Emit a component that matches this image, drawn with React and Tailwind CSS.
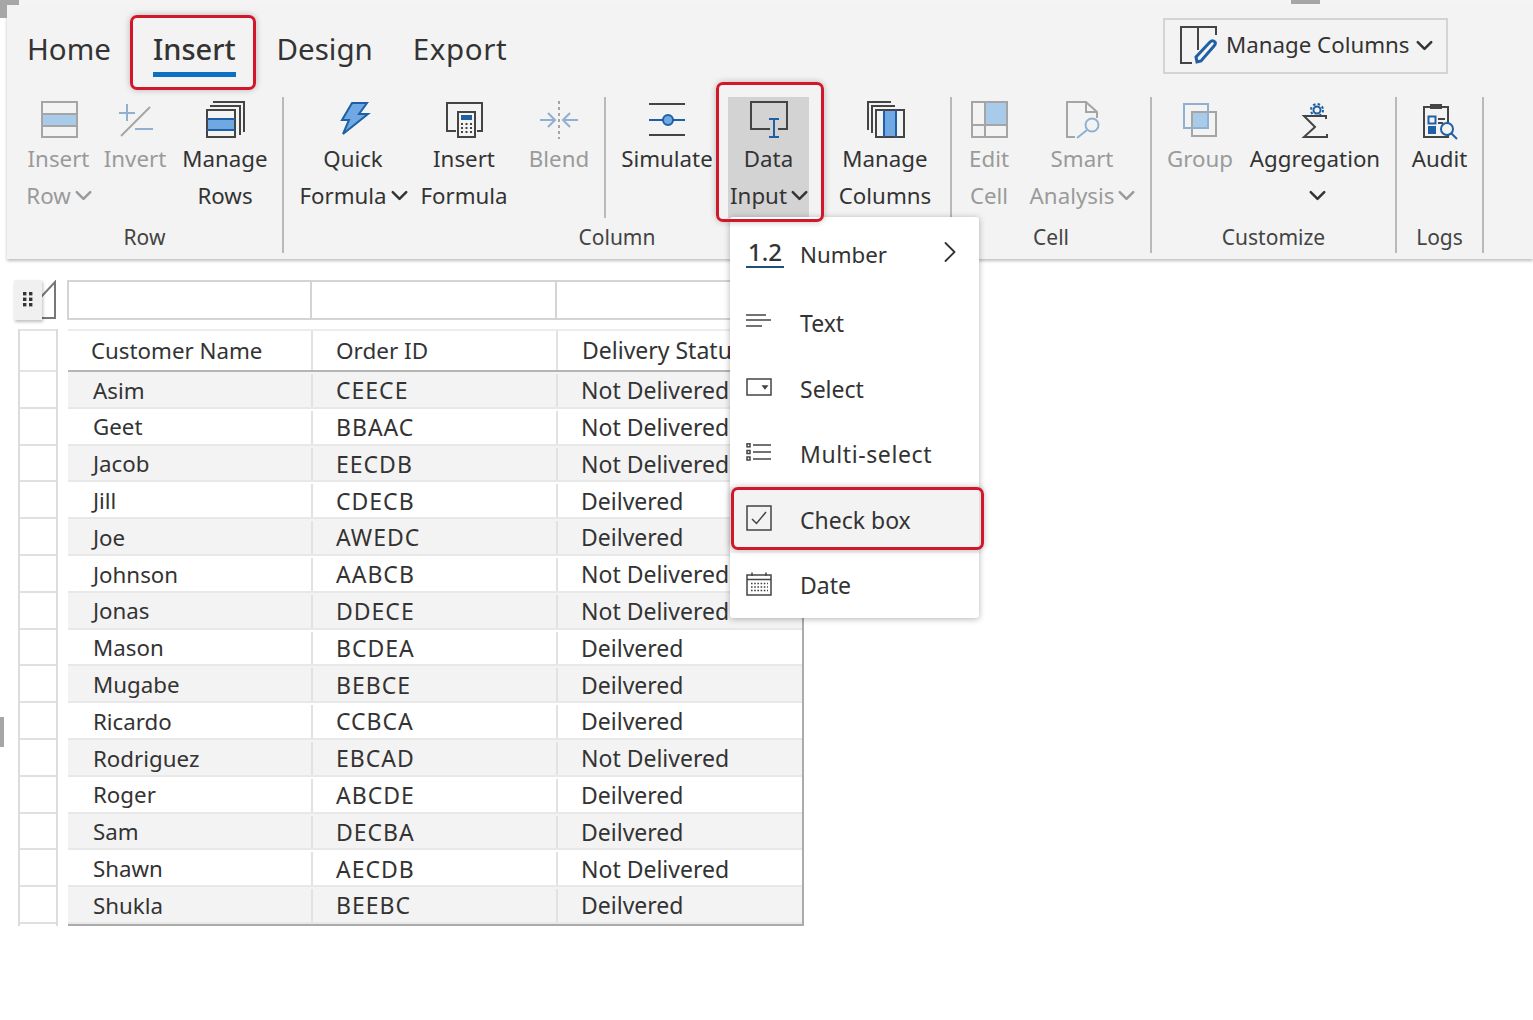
import { ChevronDown, ChevronRight } from 'lucide-react';

const font = { fontFamily: '"Noto Sans", sans-serif' };

const GREY = '#a5a5a5';
const DARK = '#444444';
const BLUE = '#1f5fa6';
const FILL = '#6fa8e3';
const PALE = '#a9cbea';
const MUTED = '#8fb0d0';

function Ico({ children, size = 40 }) {
  return (
    <svg width={size} height={size} viewBox="0 0 40 40" fill="none" strokeWidth="2" className="shrink-0">
      {children}
    </svg>
  );
}

const icons = {
  insertRow: (
    <Ico>
      <rect x="3" y="14" width="35" height="12" fill={PALE} />
      <rect x="3" y="2" width="35" height="35" stroke={GREY} />
      <path d="M3 14H38M3 26H38" stroke={GREY} />
    </Ico>
  ),
  invert: (
    <Ico>
      <path d="M4 13H20M12 4V21M20 29H38" stroke={MUTED} />
      <path d="M6 36L35 7" stroke={GREY} />
    </Ico>
  ),
  manageRows: (
    <Ico>
      <path d="M8 2H39V32M5 6H35V35" stroke={DARK} />
      <rect x="2" y="19" width="28" height="11" fill={FILL} />
      <rect x="2" y="10" width="28" height="27" stroke={DARK} fill="none" />
      <path d="M2 19H30M2 30H30" stroke={BLUE} />
    </Ico>
  ),
  quick: (
    <Ico>
      <path d="M19 3H34L26 14H35L10 34L16 20H9Z" fill={FILL} stroke={BLUE} />
    </Ico>
  ),
  insertFormula: (
    <Ico>
      <path d="M12 31H3V3H38V31H33" stroke={DARK} />
      <rect x="14" y="12" width="17" height="25" stroke={DARK} fill="#f3f3f3" />
      <rect x="17" y="15" width="11" height="5" fill={BLUE} />
      <path d="M17 24H28M17 28H28M17 32H28" stroke={DARK} strokeDasharray="2 2.5" />
    </Ico>
  ),
  blend: (
    <Ico>
      <path d="M20 1V39" stroke={GREY} strokeDasharray="3 3" />
      <path d="M1 20H15M9 13L16 20L9 27M39 20H25M31 13L24 20L31 27" stroke={MUTED} />
    </Ico>
  ),
  simulate: (
    <Ico>
      <path d="M2 4H38M2 35H38" stroke={DARK} />
      <path d="M2 20H38" stroke={BLUE} />
      <circle cx="21" cy="20" r="5" fill={FILL} stroke={BLUE} />
    </Ico>
  ),
  dataInput: (
    <Ico>
      <path d="M21 29H2V2H38V29H29" stroke={DARK} />
      <path d="M25 19V36M20 19H30M20 37H30" stroke={BLUE} />
    </Ico>
  ),
  manageCols: (
    <Ico>
      <path d="M3 30V2H26M7 33V6H30" stroke={DARK} />
      <rect x="19" y="10" width="12" height="27" fill={FILL} />
      <rect x="11" y="10" width="28" height="27" stroke={DARK} />
      <path d="M19 10V37M31 10V37" stroke={BLUE} />
    </Ico>
  ),
  editCell: (
    <Ico>
      <rect x="16" y="2" width="22" height="23" fill={PALE} />
      <rect x="3" y="2" width="35" height="35" stroke={GREY} />
      <path d="M16 2V37M3 25H38" stroke={GREY} />
    </Ico>
  ),
  smart: (
    <Ico>
      <path d="M13 37H5V2H24L35 12V18M24 2V12H35" stroke={GREY} />
      <circle cx="30" cy="25" r="6.5" stroke={MUTED} />
      <path d="M25 30L15 38" stroke={MUTED} />
    </Ico>
  ),
  group: (
    <Ico>
      <rect x="12" y="12" width="16" height="16" fill={PALE} />
      <rect x="12" y="12" width="24" height="24" stroke={GREY} />
      <rect x="4" y="4" width="24" height="24" stroke={MUTED} />
    </Ico>
  ),
  aggregation: (
    <Ico>
      <circle cx="22" cy="10" r="3.5" stroke={BLUE} />
      <circle cx="22" cy="10" r="6" stroke={BLUE} strokeDasharray="2.5 2.2" />
      <path d="M31 15V19" stroke={DARK} />
      <path d="M32 16H9L20 27L9 37H32V34" stroke={DARK} />
    </Ico>
  ),
  audit: (
    <Ico>
      <rect x="4" y="7" width="24" height="30" stroke={DARK} />
      <rect x="10" y="4" width="12" height="5" fill={DARK} />
      <rect x="8.5" y="16.5" width="7" height="7" stroke={BLUE} />
      <rect x="8" y="26" width="8" height="8" fill={BLUE} />
      <path d="M18 19H25M18 23H23" stroke={DARK} />
      <circle cx="27" cy="29" r="6" stroke={BLUE} fill="#f3f3f3" />
      <path d="M31 33L37 39" stroke={BLUE} />
    </Ico>
  ),
};

// one ribbon button: icon on top, then up to two lines of text
function Tool({ icon, lines, caret, disabled, className = '' }) {
  const [first, second] = lines;
  return (
    <div className={'flex flex-col items-center pt-[3px] shrink-0 text-[22.3px] ' + (disabled ? 'text-[#9a9a9a] ' : 'text-[#333333] ') + className}>
      <div className="h-[40px]">{icons[icon]}</div>
      <div className="h-[37px] leading-[37px] whitespace-nowrap">{first}</div>
      <div className="h-[37px] leading-[37px] flex items-center whitespace-nowrap">
        {second}
        {caret && <ChevronDown size={27} strokeWidth={2.2} className="-ml-[1px] -mr-[6px]" />}
      </div>
    </div>
  );
}

function Group({ label, className, children }) {
  return (
    <div className={'flex flex-col h-[156px] border-r-2 border-[#b9b9b9] shrink-0 ' + className}>
      <div className="flex h-[121px] shrink-0">{children}</div>
      <div className="text-center text-[21px] text-[#444444] pt-[4px] leading-[31px]">{label}</div>
    </div>
  );
}

const rows = [
  ['Asim', 'CEECE', 'Not Delivered'],
  ['Geet', 'BBAAC', 'Not Delivered'],
  ['Jacob', 'EECDB', 'Not Delivered'],
  ['Jill', 'CDECB', 'Deilvered'],
  ['Joe', 'AWEDC', 'Deilvered'],
  ['Johnson', 'AABCB', 'Not Delivered'],
  ['Jonas', 'DDECE', 'Not Delivered'],
  ['Mason', 'BCDEA', 'Deilvered'],
  ['Mugabe', 'BEBCE', 'Deilvered'],
  ['Ricardo', 'CCBCA', 'Deilvered'],
  ['Rodriguez', 'EBCAD', 'Not Delivered'],
  ['Roger', 'ABCDE', 'Deilvered'],
  ['Sam', 'DECBA', 'Deilvered'],
  ['Shawn', 'AECDB', 'Not Delivered'],
  ['Shukla', 'BEEBC', 'Deilvered'],
];

const menuItems = [
  {
    label: 'Number',
    row: 'h-[68.5px] pb-[4px]',
    text: 'text-[22.3px]',
    icon: (
      <div className="w-[38px] text-center border-b-2 border-[#1f4e79] font-medium text-[24px] leading-[29px] text-[#333333]">1.2</div>
    ),
    more: true,
  },
  {
    label: 'Text',
    icon: (
      <svg width="26" height="14" viewBox="0 0 26 14" fill="none" stroke={DARK} strokeWidth="1.5">
        <path d="M0 1H20M0 6H25M0 12H16" />
      </svg>
    ),
  },
  {
    label: 'Select',
    icon: (
      <svg width="26" height="18" viewBox="0 0 26 18" fill="none" stroke={DARK} strokeWidth="1.5">
        <rect x="1" y="1" width="24" height="16" />
        <path d="M17 8H21L19 10.5Z" fill={DARK} />
      </svg>
    ),
  },
  {
    label: 'Multi-select',
    text: 'tracking-[0.6px]',
    icon: (
      <svg width="26" height="18" viewBox="0 0 26 18" fill="none" stroke={DARK} strokeWidth="1.5">
        <path d="M7 2H25M7 9H25M7 16H25" />
        <rect x="1" y="0.8" width="3" height="3" />
        <rect x="1" y="7.5" width="3" height="3" />
        <rect x="1" y="14" width="3" height="3" />
      </svg>
    ),
  },
  {
    label: 'Check box',
    active: true,
    icon: (
      <svg width="26" height="26" viewBox="0 0 26 26" fill="none" stroke={DARK} strokeWidth="1.5">
        <rect x="1" y="1" width="24" height="24" />
        <path d="M6 14L10.5 18.5L20 7" />
      </svg>
    ),
  },
  {
    label: 'Date',
    icon: (
      <svg width="26" height="24" viewBox="0 0 26 24" fill="none" stroke={DARK} strokeWidth="1.5">
        <rect x="1" y="3" width="24" height="20" />
        <path d="M1 7.5H25M6 0.5V4M20 0.5V4" />
        <path d="M5 11.5H22M5 15H22M5 18.5H22" strokeDasharray="1.6 1.6" />
      </svg>
    ),
  },
];

function RedBox({ className }) {
  return <div className={'absolute border-[3px] border-[#d3162a] rounded-[7px] shadow-[0_0_6px_rgba(0,0,0,0.25)] pointer-events-none ' + className} />;
}

export default function App() {
  return (
    <div style={font} className="relative w-[1533px] h-[1020px] overflow-hidden bg-white text-[23px] text-[#333333]">
      {/* selection handles left over in the capture */}
      <div className="h-[7px] bg-[#f4f4f4]" />
      <div className="absolute left-0 top-0 w-[19px] h-[5px] bg-[#a6a6a6]" />
      <div className="absolute left-0 top-0 w-[7px] h-[18px] bg-[#a6a6a6]" />
      <div className="absolute left-[1291px] top-0 w-[29px] h-[4px] bg-[#a6a6a6]" />
      <div className="absolute left-0 top-[717px] w-[4px] h-[30px] bg-[#a6a6a6]" />

      {/* ribbon */}
      <div className="ml-[7px] h-[252px] bg-[#f3f3f3] shadow-[0_2px_3px_rgba(0,0,0,0.25)]">
        <div className="h-[89px] flex items-start pl-[20px] pr-[85px] text-[29.5px] text-[#333333]">
          <div className="mt-[21px] leading-[41px]">Home</div>
          <div className="mt-[21px] ml-[42px] text-[29px] leading-[41px] font-medium border-b-[5px] border-[#0e6fc4] h-[49px]">Insert</div>
          <div className="mt-[21px] ml-[41px] leading-[41px]">Design</div>
          <div className="mt-[21px] ml-[40px] leading-[41px] tracking-[0.6px]">Export</div>
          <div className="ml-auto mt-[11px] w-[285px] h-[56px] border-2 border-[#d4d4d4] flex items-center pl-[14px] pb-[2px] text-[22.3px]">
            <svg width="38" height="38" viewBox="0 0 38 38" fill="none" strokeWidth="2" className="shrink-0">
              <path d="M13 37H2V1H37V9M19 1V24" stroke={DARK} />
              <path d="M18 36L17 31L31 16C33 14 35 15 36 16C37 18 36 19 35 20L22 35Z" stroke={BLUE} strokeWidth="3" />
            </svg>
            <span className="ml-[9px]">Manage Columns</span>
            <ChevronDown size={27} strokeWidth={2.2} className="ml-[1px]" />
          </div>
        </div>

        <div className="flex h-[163px] pt-[1px]">
          <Group label="Row" className="w-[277px]">
            <Tool icon="insertRow" lines={['Insert', 'Row']} caret disabled className="w-[73px] ml-[15px]" />
            <Tool icon="invert" lines={['Invert']} disabled className="w-[80px]" />
            <Tool icon="manageRows" lines={['Manage', 'Rows']} className="w-[100px]" />
          </Group>
          <Group label="Column" className="w-[668px]">
            <Tool icon="quick" lines={['Quick', 'Formula']} caret className="w-[116px] ml-[11px]" />
            <Tool icon="insertFormula" lines={['Insert', 'Formula']} className="w-[106px]" />
            <Tool icon="blend" lines={['Blend']} disabled className="w-[84px]" />
            <div className="w-[2px] bg-[#b9b9b9] ml-[3px] shrink-0" />
            <Tool icon="simulate" lines={['Simulate']} className="w-[100px] ml-[11px]" />
            <Tool icon="dataInput" lines={['Data', 'Input']} caret className="w-[81px] ml-[11px] bg-[#d3d3d3]" />
            <Tool icon="manageCols" lines={['Manage', 'Columns']} className="w-[116px] ml-[18px]" />
          </Group>
          <Group label="Cell" className="w-[200px]">
            <Tool icon="editCell" lines={['Edit', 'Cell']} disabled className="w-[74px]" />
            <Tool icon="smart" lines={['Smart', 'Analysis']} caret disabled className="w-[112px]" />
          </Group>
          <Group label="Customize" className="w-[245px]">
            <Tool icon="group" lines={['Group']} disabled className="w-[86px] ml-[5px]" />
            <Tool icon="aggregation" lines={['Aggregation', '']} caret className="w-[144px]" />
          </Group>
          <Group label="Logs" className="w-[87px]">
            <Tool icon="audit" lines={['Audit']} className="w-[85px]" />
          </Group>
        </div>
      </div>

      {/* column filter strip */}
      <div className="flex mt-[21px] ml-[14px] h-[40px]">
        <div className="w-[28px] h-[40px] pb-[3px] bg-[#f0f0f0] shadow-[1px_2px_3px_rgba(0,0,0,0.25)] flex items-center justify-center z-10">
          <svg width="12" height="16" viewBox="0 0 12 16" fill="#333333">
            <rect x="1" y="1" width="3.4" height="3.4" />
            <rect x="7" y="1" width="3.4" height="3.4" />
            <rect x="1" y="6.6" width="3.4" height="3.4" />
            <rect x="7" y="6.6" width="3.4" height="3.4" />
            <rect x="1" y="12" width="3.4" height="3.4" />
            <rect x="7" y="12" width="3.4" height="3.4" />
          </svg>
        </div>
        <svg width="16" height="40" viewBox="0 0 16 40" fill="none" stroke="#777777" strokeWidth="2" className="-ml-[1px] shrink-0">
          <path d="M0 17L14 2V38H0" />
        </svg>
        <div className="ml-[10px] flex w-[680px] border-2 border-[#d4d4d4]">
          <div className="w-[243px] border-r-2 border-[#d4d4d4]" />
          <div className="w-[245px] border-r-2 border-[#d4d4d4]" />
        </div>
      </div>

      {/* table */}
      <div className="flex mt-[9px] ml-[18px]">
        <div className="w-[40px] border-x-2 border-[#dcdcdc] mr-[10px] shrink-0">
          <div className="h-[43px] border-y-2 border-[#e4e4e4]" />
          {rows.map((r) => (
            <div key={r[0]} className="h-[36.8px] border-b-2 border-[#e0e0e0]" />
          ))}
        </div>
        <div className="w-[736px] border-r-2 border-b-2 border-[#ababab]">
          <div className="h-[43px] flex items-center border-t-2 border-b-2 border-t-[#ececec] border-b-[#b5b5b5]">
            <div className="w-[245px] h-full flex items-center pl-[23px] text-[22.3px] border-r-2 border-[#e2e2e2]">Customer Name</div>
            <div className="w-[245px] h-full flex items-center pl-[23px] text-[22.5px] border-r-2 border-[#e2e2e2]">Order ID</div>
            <div className="flex-1 pl-[24px]">Delivery Status</div>
          </div>
          {rows.map((r, i) => (
            <div key={r[0]} className={'h-[36.8px] pt-[2px] flex items-center border-b-2 border-[#e8e8e8] ' + (i % 2 === 0 ? 'bg-[#f3f3f3]' : 'bg-white')}>
              <div className="w-[245px] h-full flex items-center pl-[25px] text-[22.3px] border-r-2 border-[#e2e2e2]">{r[0]}</div>
              <div className="w-[245px] h-full flex items-center pl-[23px] tracking-[1px] border-r-2 border-[#e2e2e2]">{r[1]}</div>
              <div className="flex-1 pl-[23px]">{r[2]}</div>
            </div>
          ))}
        </div>
      </div>

      {/* Data Input dropdown */}
      <div className="absolute left-[730px] top-[217px] w-[249px] h-[401px] bg-white rounded-[3px] shadow-[0_1px_6px_rgba(0,0,0,0.3)] pt-[5px]">
        {menuItems.map((item) => (
          <div key={item.label} className={'flex items-center pl-[16px] ' + (item.row || 'h-[65.6px] ') + (item.active ? ' bg-[#f3f3f3]' : '')}>
            <div className="w-[54px] shrink-0 -mt-[4px]">{item.icon}</div>
            <span className={item.text || ''}>{item.label}</span>
            {item.more && <ChevronRight size={36} strokeWidth={1.2} className="ml-auto mr-[11px] -mt-[4px]" />}
          </div>
        ))}
      </div>

      {/* red callouts */}
      <RedBox className="left-[130px] top-[15px] w-[126px] h-[75px]" />
      <RedBox className="left-[716px] top-[82px] w-[108px] h-[140px]" />
      <RedBox className="left-[731px] top-[487px] w-[253px] h-[63px]" />
    </div>
  );
}
